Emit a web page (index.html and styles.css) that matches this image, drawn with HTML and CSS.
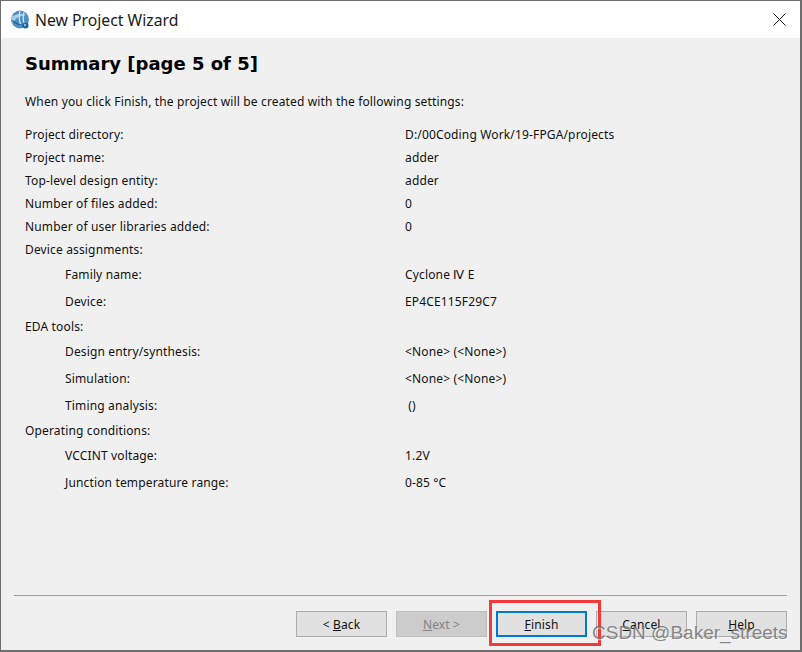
FILE: index.html
```html
<!DOCTYPE html>
<html lang="en">
<head>
    <meta charset="UTF-8">
    <title>New Project Wizard</title>
    <link rel="stylesheet" href="styles.css">
</head>
<body>
    <div class="window">
        <div class="titlebar">
            <svg class="app-icon" width="20" height="20" viewBox="0 0 20 20">
                <circle cx="10" cy="9.5" r="9" fill="#4f8fc4"/>
                <path d="M2.5 6 Q9 2.5 17 5 Q12 5 7 8 Q4 10 2.5 13.5 Q0.5 9 2.5 6Z" fill="#a9cfe8"/>
                <path d="M10 1 Q8 8 11 16 M14 2.5 Q12 8 14.5 14" stroke="#dcebf5" stroke-width="1.2" fill="none"/>
                <path d="M2 10.5 Q8 15.5 15 15.5" stroke="#1d5d92" stroke-width="1.2" fill="none"/>
                <circle cx="15.5" cy="15.5" r="3" fill="#17659f"/>
                <circle cx="15" cy="15" r="1.2" fill="#8fc3e6"/>
            </svg>
            <span class="title-text">New Project Wizard</span>
            <svg class="close-icon" width="13" height="13" viewBox="0 0 13 13">
                <path d="M0.5 0.5 L12.5 12.5 M12.5 0.5 L0.5 12.5" stroke="#111" stroke-width="1" fill="none"/>
            </svg>
        </div>

        <div class="content">
            <h1>Summary [page 5 of 5]</h1>
            <p class="intro">When you click Finish, the project will be created with the following settings:</p>

            <div class="settings">
                <div class="row"><span>Project directory:</span><span>D:/00Coding Work/19-FPGA/projects</span></div>
                <div class="row"><span>Project name:</span><span>adder</span></div>
                <div class="row"><span>Top-level design entity:</span><span>adder</span></div>
                <div class="row"><span>Number of files added:</span><span>0</span></div>
                <div class="row"><span>Number of user libraries added:</span><span>0</span></div>
                <div class="row"><span>Device assignments:</span><span></span></div>
                <div class="row sub"><span>Family name:</span><span>Cyclone Ⅳ E</span></div>
                <div class="row sub"><span>Device:</span><span>EP4CE115F29C7</span></div>
                <div class="row"><span>EDA tools:</span><span></span></div>
                <div class="row sub"><span>Design entry/synthesis:</span><span>&lt;None&gt; (&lt;None&gt;)</span></div>
                <div class="row sub"><span>Simulation:</span><span>&lt;None&gt; (&lt;None&gt;)</span></div>
                <div class="row sub"><span>Timing analysis:</span><span>&nbsp;()</span></div>
                <div class="row"><span>Operating conditions:</span><span></span></div>
                <div class="row sub"><span>VCCINT voltage:</span><span>1.2V</span></div>
                <div class="row sub"><span>Junction temperature range:</span><span>0-85 °C</span></div>
            </div>
        </div>

        <div class="footer">
            <div class="buttons">
                <button class="btn">&lt; <u>B</u>ack</button>
                <button class="btn" disabled><u>N</u>ext &gt;</button>
                <button class="btn btn-default"><u>F</u>inish</button>
                <button class="btn"><u>C</u>ancel</button>
                <button class="btn"><u>H</u>elp</button>
            </div>
        </div>

        <div class="highlight"></div>
        <div class="watermark">CSDN @Baker_streets</div>
    </div>
</body>
</html>
```

FILE: styles.css
```css
html, body {
    margin: 0;
    padding: 0;
}
body {
    width: 802px;
    height: 652px;
    overflow: hidden;
    font-family: "Noto Sans", "Open Sans", sans-serif;
    font-size: 12px;
    letter-spacing: 0.15px;
    color: #111;
}
.window {
    position: relative;
    box-sizing: border-box;
    width: 802px;
    height: 652px;
    display: flex;
    flex-direction: column;
    background: #f0f0f0;
    border: 1px solid #6d6d6d;
    border-right-width: 2px;
    border-bottom-width: 2px;
}
.titlebar {
    flex: none;
    height: 37px;
    display: flex;
    align-items: center;
    padding: 0 14px 0 9px;
    background: #fff;
}
.app-icon {
    margin-right: 5px;
}
.title-text {
    flex: 1;
    font-size: 15.75px;
    letter-spacing: 0;
    color: #1a1a1a;
}
.content {
    flex: 1;
    padding: 12px 0 0 24px;
}
h1 {
    margin: 0;
    font-family: "DejaVu Sans", sans-serif;
    font-size: 18px;
    line-height: 27px;
    font-weight: bold;
    letter-spacing: 0;
    color: #000;
}
.intro {
    margin: 15px 0 0;
    line-height: 20px;
}
.settings {
    margin-top: 11px;
}
.row {
    display: grid;
    grid-template-columns: 380px 1fr;
    height: 23px;
    line-height: 23px;
    white-space: nowrap;
}
.row.sub {
    height: 27px;
    line-height: 27px;
}
.row.sub span:first-child {
    padding-left: 40px;
}
.footer {
    flex: none;
    margin: 0 13px;
    height: 54px;
    border-top: 1px solid #a0a0a0;
}
.buttons {
    display: flex;
    justify-content: flex-end;
    gap: 9px;
    margin-top: 15px;
}
.btn {
    box-sizing: border-box;
    width: 91px;
    height: 26px;
    padding: 0;
    font-family: inherit;
    font-size: 12px;
    letter-spacing: 0.15px;
    color: #111;
    background: #e1e1e1;
    border: 1px solid #adadad;
}
.btn:disabled {
    color: #838383;
    background: #cccccc;
    border-color: #bfbfbf;
}
.btn-default {
    border: 2px solid #0078d7;
}
.highlight {
    position: absolute;
    left: 488px;
    top: 599px;
    box-sizing: border-box;
    width: 112px;
    height: 46px;
    border: 3px solid #f33a3a;
}
.watermark {
    position: absolute;
    left: 591px;
    top: 621px;
    font-family: "Liberation Sans", sans-serif;
    font-size: 19px;
    line-height: 22px;
    letter-spacing: 0;
    white-space: nowrap;
    color: rgba(100, 100, 100, 0.75);
    text-shadow: 1px 1px 1px rgba(255, 255, 255, 0.6);
}
```
